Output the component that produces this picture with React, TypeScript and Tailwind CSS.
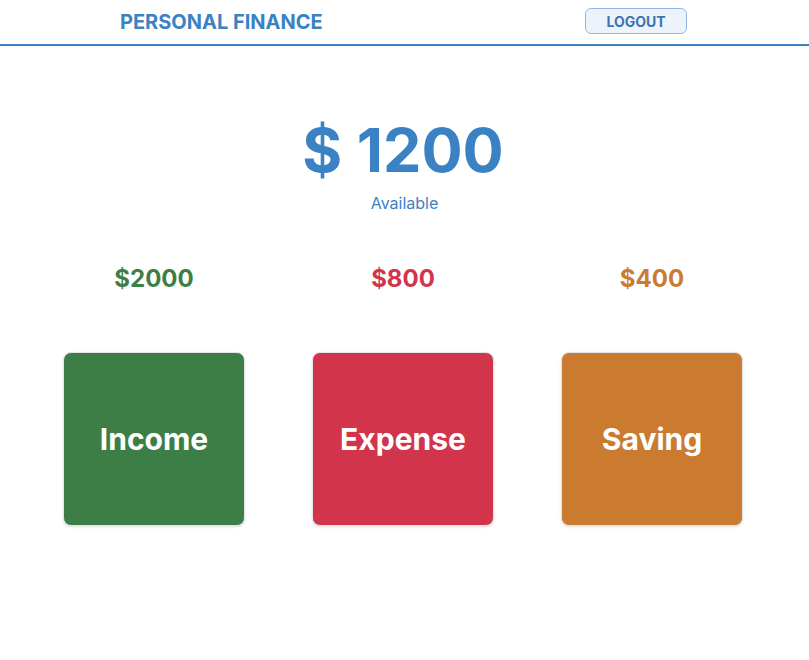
export default function App() {
  const cards = [
    { label: 'Income', amount: '$2000', text: 'text-[#3d7e46]', bg: 'bg-[#3d7e46]' },
    { label: 'Expense', amount: '$800', text: 'text-[#d1344b]', bg: 'bg-[#d1344b]' },
    { label: 'Saving', amount: '$400', text: 'text-[#cb7b2f]', bg: 'bg-[#cb7b2f]' },
  ]

  return (
    <div className="min-h-screen bg-white font-['Inter','Noto_Sans',sans-serif]">
      {/* header */}
      <header className="h-[46px] flex items-center justify-between pl-[120px] pr-[122px] border-b-2 border-[#3b82c4]">
        <span className="text-xl font-bold text-[#3b82c4]">PERSONAL FINANCE</span>
        <button className="w-[102px] h-[26px] -mt-[2px] rounded-md border border-[#8fb5e6] bg-[#edf3fb] text-[14px] font-bold text-[#3b74b4]">LOGOUT</button>
      </header>

      {/* balance */}
      <div className="flex flex-col items-center pt-[74px]">
        <div className="text-[61px] leading-none font-bold text-[#3b82c4] pr-[3px]">$ 1200</div>
        <div className="mt-[10px] text-base text-[#3b82c4]">Available</div>
      </div>

      <div className="grid grid-cols-3 gap-[67px] w-[680px] ml-[63px] mt-[48px]">
        {cards.map(c => (
          <div key={c.label} className="flex flex-col items-center">
            <div className={`text-2xl font-bold ${c.text}`}>{c.amount}</div>
            <div className={`mt-[57px] w-[182px] h-[174px] rounded-lg border border-gray-200 shadow-sm flex items-center justify-center ${c.bg}`}>
              <span className="text-3xl font-bold text-white">{c.label}</span>
            </div>
          </div>
        ))}
      </div>
    </div>
  )
}
